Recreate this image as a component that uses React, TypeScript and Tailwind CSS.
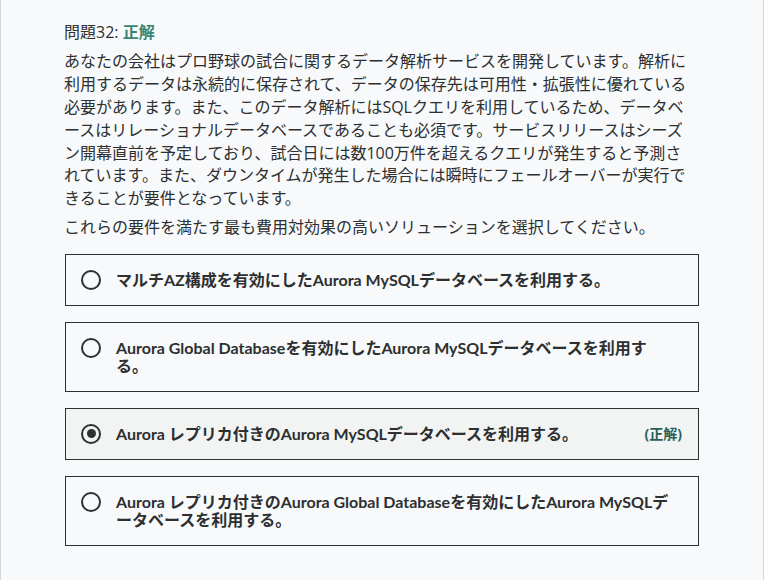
import React from "react";

type Opt = { text: string; selected?: boolean; correct?: boolean };

const options: Opt[] = [
  { text: "マルチAZ構成を有効にしたAurora MySQLデータベースを利用する。" },
  { text: "Aurora Global Databaseを有効にしたAurora MySQLデータベースを利用する。" },
  { text: "Aurora レプリカ付きのAurora MySQLデータベースを利用する。", selected: true, correct: true },
  { text: "Aurora レプリカ付きのAurora Global Databaseを有効にしたAurora MySQLデータベースを利用する。" },
];

function Radio({ selected }: { selected?: boolean }) {
  return (
    <div className="flex h-[18px] w-[20px] shrink-0 items-center justify-center">
      <div className="flex h-[20px] w-[20px] shrink-0 items-center justify-center rounded-full border-2 border-[#2d2f31]">
        {selected && <div className="h-[9px] w-[9px] rounded-full bg-[#2d2f31]" />}
      </div>
    </div>
  );
}

export default function App() {
  return (
    <div className="flex h-[580px] w-[772px] bg-white font-['Open_Sans','Noto_Sans_CJK_JP',sans-serif] text-[#2d2f31]">
      <div className="h-full w-[764px] border-x border-[#d1d7dc] bg-[#f7f9fa]">
        <div className="ml-[63px] w-[636px] pt-[21px]">
          <div className="text-[16px] leading-[22.4px]">
            問題32: <span className="font-bold text-[#3a8570]">正解</span>
          </div>
          <p className="mt-[7px] w-[630px] text-[16px] leading-[22.8px]">
            あなたの会社はプロ野球の試合に関するデータ解析サービスを開発しています。解析に利用するデータは永続的に保存されて、データの保存先は可用性・拡張性に優れている必要があります。また、このデータ解析にはSQLクエリを利用しているため、データベースはリレーショナルデータベースであることも必須です。サービスリリースはシーズン開幕直前を予定しており、試合日には数100万件を超えるクエリが発生すると予測されています。また、ダウンタイムが発生した場合には瞬時にフェールオーバーが実行できることが要件となっています。
          </p>
          <p className="mt-[6px] text-[16px] leading-[22.8px]">
            これらの要件を満たす最も費用対効果の高いソリューションを選択してください。
          </p>
          <div className="mt-[15px] flex flex-col gap-4">
            {options.map((o, i) => (
              <div
                key={i}
                className={
                  o.selected
                    ? "ml-px flex w-[634px] items-start gap-[15px] border border-[#2d2f31] bg-[#f1f4f3] py-4 pl-[15px] pr-4"
                    : "ml-px flex w-[634px] items-start gap-[15px] border border-[#2d2f31] py-4 pl-[15px] pr-4"
                }
              >
                <Radio selected={o.selected} />
                <div className="flex-1 pr-[10px] font-['Lato','Noto_Sans_CJK_JP',sans-serif] text-[16px] font-bold leading-[18px]">
                  {o.text}
                </div>
                {o.correct && (
                  <div className="shrink-0 text-[14px] font-bold leading-[18px] text-[#2b5f5a]">(正解)</div>
                )}
              </div>
            ))}
          </div>
        </div>
      </div>
    </div>
  );
}
